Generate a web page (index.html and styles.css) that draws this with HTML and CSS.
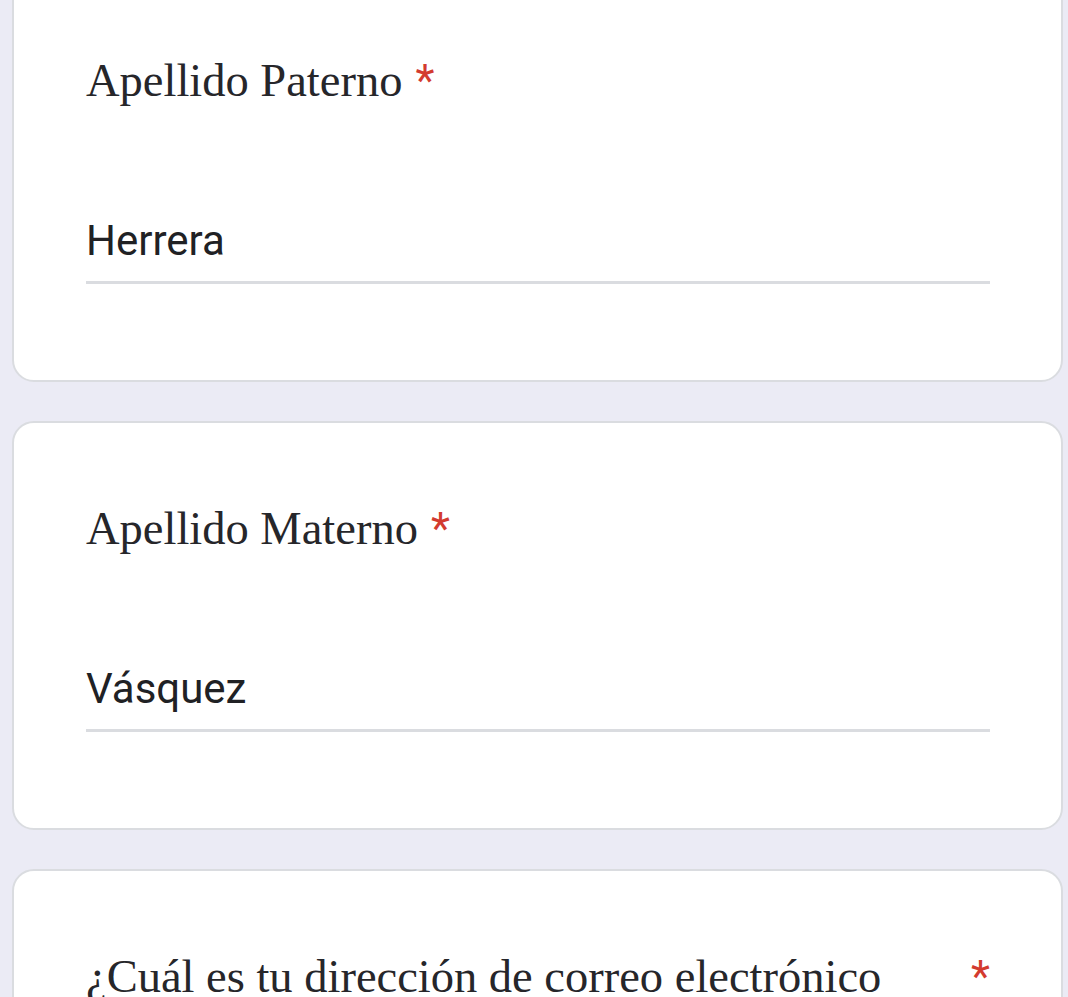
FILE: index.html
```html
<!DOCTYPE html>
<html lang="es">
<head>
    <meta charset="UTF-8">
    <meta name="viewport" content="width=device-width, initial-scale=1.0">
    <title>Formulario</title>
    <link rel="stylesheet" href="styles.css">
</head>
<body>
    <div class="form-list">
        <div class="question-card">
            <div class="question-title">
                <span class="title-text">Apellido Paterno</span>
                <span class="required">*</span>
            </div>
            <div class="answer">Herrera</div>
        </div>

        <div class="question-card">
            <div class="question-title">
                <span class="title-text">Apellido Materno</span>
                <span class="required">*</span>
            </div>
            <div class="answer">Vásquez</div>
        </div>

        <div class="question-card">
            <div class="question-title">
                <span class="title-text">¿Cuál es tu dirección de correo electrónico institucional?</span>
                <span class="required">*</span>
            </div>
            <div class="answer"></div>
        </div>
    </div>
</body>
</html>
```

FILE: styles.css
```css
body {
    background-color: #ebebf5;
    margin: 0;
    padding: 0;
    font-family: Roboto, "Liberation Sans", Arial, sans-serif;
    color: #202124;
}

.form-list {
    display: flex;
    flex-direction: column;
    gap: 39px;
    margin: -27px 5px 0 12px;
}

.question-card {
    background-color: white;
    border: 2px solid #dadce0;
    border-radius: 22px;
    padding: 76px 71px 96px 72px;
}

.question-title {
    display: flex;
    align-items: baseline;
    gap: 13px;
    font-size: 46.5px;
    line-height: 60px;
}

.title-text {
    font-family: "Liberation Serif", "Times New Roman", serif;
    color: #26262a;
}

.required {
    font-family: Roboto, "Liberation Sans", Arial, sans-serif;
    font-size: 44px;
    color: #d33b2f;
}

.answer {
    margin-top: 105px;
    font-size: 42px;
    line-height: 50px;
    min-height: 50px;
    padding-bottom: 15px;
    border-bottom: 3px solid #dadce0;
}
```
